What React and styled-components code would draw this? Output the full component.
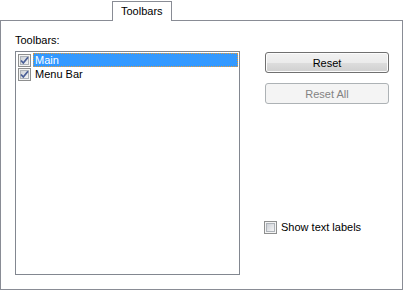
import React from 'react'
import styled, { createGlobalStyle } from 'styled-components'

const GlobalStyle = createGlobalStyle`
    html, body {
        margin: 0;
        padding: 0;
        background: #ffffff;
    }
    body {
        font-family: "Liberation Sans", Arial, sans-serif;
        font-size: 11px;
        color: #000000;
    }
`

const Page = styled.div`
    width: 404px;
    height: 290px;
    padding-top: 1px;
    box-sizing: border-box;
`

const TabStrip = styled.div`
    display: flex;
    padding-left: 112px;
    height: 19px;
`

const Tab = styled.div`
    position: relative;
    z-index: 1;
    height: 20px;
    padding: 0 8px;
    box-sizing: border-box;
    border: 1px solid #898c95;
    border-bottom: none;
    background: #ffffff;
    line-height: 18px;
`

const Panel = styled.div`
    display: flex;
    gap: 25px;
    width: 403px;
    height: 270px;
    box-sizing: border-box;
    border: 1px solid #898c95;
    padding: 13px 0 0 14px;
`

const Column = styled.div`
    display: flex;
    flex-direction: column;
    width: ${p => p.$width}px;
    padding-top: ${p => p.$top || 0}px;
`

const Label = styled.div`
    line-height: 13px;
    margin-bottom: 4px;
`

const List = styled.div`
    width: 225px;
    height: 224px;
    box-sizing: border-box;
    border: 1px solid #828790;
    padding: 1px 0 0 2px;
`

const Row = styled.div`
    display: flex;
    align-items: center;
    height: 14px;
    gap: 2px;
`

const ItemText = styled.span`
    flex: 1;
    height: 14px;
    line-height: 12px;
    padding: 0 1px;
    box-sizing: border-box;
    margin-right: 1px;
    border: 1px ${p => (p.$selected ? 'dotted #e39a3a' : 'solid transparent')};
    background: ${p => (p.$selected ? '#3399ff' : 'transparent')};
    color: ${p => (p.$selected ? '#ffffff' : '#000000')};
`

const Button = styled.div`
    height: 21px;
    box-sizing: border-box;
    border-radius: 3px;
    display: flex;
    align-items: center;
    justify-content: center;
    margin-bottom: 10px;
    border: 1px solid ${p => (p.$disabled ? '#adb2b5' : '#707070')};
    background: ${p =>
        p.$disabled
            ? '#f4f4f4'
            : 'linear-gradient(#f2f2f2 0%, #ebebeb 50%, #dddddd 51%, #cfcfcf 100%)'};
    color: ${p => (p.$disabled ? '#838383' : '#000000')};
    box-shadow: ${p => (p.$disabled ? 'none' : 'inset 0 0 0 1px #fcfcfc')};
`

const Option = styled.label`
    display: flex;
    align-items: center;
    gap: 4px;
    margin-top: 107px;
    margin-left: -1px;
    line-height: 13px;
`

function CheckBox({ checked }) {
    return (
        <svg width="13" height="13" viewBox="0 0 13 13" style={{ flex: 'none' }}>
            <defs>
                <linearGradient id="cbfill" x1="0" y1="0" x2="1" y2="1">
                    <stop offset="0" stopColor="#cbcfd5" />
                    <stop offset="1" stopColor="#f7f7f7" />
                </linearGradient>
            </defs>
            <rect x="0.5" y="0.5" width="12" height="12" fill="#f4f4f4" stroke="#8e8f8f" />
            <rect x="2.5" y="2.5" width="8" height="8" fill="url(#cbfill)" stroke="#aeb3b9" />
            {checked && (
                <path
                    d="M3 6.5 L5.3 9 L10 3.3"
                    fill="none"
                    stroke="#4a5f97"
                    strokeWidth="1.8"
                />
            )}
        </svg>
    )
}

const toolbars = [
    { id: 1, name: 'Main', checked: true, selected: true },
    { id: 2, name: 'Menu Bar', checked: true, selected: false },
]

function App() {
    return (
        <Page>
            <GlobalStyle />
            <TabStrip>
                <Tab>Toolbars</Tab>
            </TabStrip>
            <Panel>
                <Column $width={225}>
                    <Label>Toolbars:</Label>
                    <List>
                        {toolbars.map(t => (
                            <Row key={t.id}>
                                <CheckBox checked={t.checked} />
                                <ItemText $selected={t.selected}>{t.name}</ItemText>
                            </Row>
                        ))}
                    </List>
                </Column>
                <Column $width={124} $top={18}>
                    <Button>Reset</Button>
                    <Button $disabled>Reset All</Button>
                    <Option>
                        <CheckBox checked={false} />
                        Show text labels
                    </Option>
                </Column>
            </Panel>
        </Page>
    )
}

export default App
